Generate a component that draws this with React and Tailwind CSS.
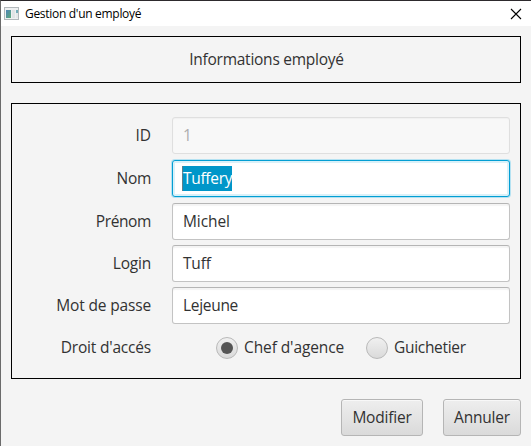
import React from "react";

const fields = [
  { label: "ID", value: "1", state: "disabled", row: "h-[37px] mb-[6px]", tl: "tracking-[-0.1px]", tv: "" },
  { label: "Nom", value: "Tuffery", state: "focused", row: "h-[37px] mb-[6px]", tl: "tracking-[-0.3px]", tv: "tracking-[-0.3px]" },
  { label: "Prénom", value: "Michel", state: "normal", row: "h-[37px] mb-[5px]", tl: "tracking-[-0.4px]", tv: "tracking-[-0.1px]" },
  { label: "Login", value: "Tuff", state: "normal", row: "h-[37px] mb-[5px]", tl: "tracking-[-0.2px]", tv: "tracking-[-0.2px]" },
  { label: "Mot de passe", value: "Lejeune", state: "normal", row: "h-[37px] mb-[5px]", tl: "tracking-[-0.15px]", tv: "tracking-[-0.3px]" },
];

const boxStyles = {
  disabled: "border border-[#dfdfdf] bg-[#f8f8f8] text-[#aeaeae] shadow-[inset_0_1px_1px_#f0f0f0]",
  focused: "border border-[#039ed3] bg-white text-white shadow-[0_0_0_1px_#b5e2f2,inset_0_0_0_2px_#d9f1f9]",
  normal: "border border-[#c3c3c3] border-t-[#b5b5b5] bg-white text-[#323232] shadow-[inset_0_2px_1px_#f4f4f4]",
};

function Field({ label, value, state, row, tl, tv }) {
  return (
    <div className={`flex items-center ${row}`}>
      <span className={`w-[139px] pb-px text-right ${tl}`}>{label}</span>
      <div className={`ml-[21px] flex h-[37px] w-[338px] items-center rounded-[3px] pl-[10px] ${boxStyles[state]}`}>
        {state === "focused" ? (
          <span className={`flex h-[25px] w-[50px] -ml-px items-center border-l border-[#5e7f8a] bg-[#0096c9] pb-px ${tv}`}>{value}</span>
        ) : (
          <span className={`pb-px ${tv}`}>{value}</span>
        )}
      </div>
    </div>
  );
}

function Radio({ label, checked, tracking }) {
  return (
    <div className="flex items-center">
      <span className="flex size-[22px] items-center justify-center rounded-full border border-[#b9b9b9] bg-linear-to-b from-[#f0f0f0] to-[#dadada]">
        {checked && <span className="size-[12px] rounded-full bg-[#555555]" />}
      </span>
      <span className={`ml-[6px] pb-px ${tracking}`}>{label}</span>
    </div>
  );
}

function Button({ children, width }) {
  return (
    <button
      className={`flex h-[37px] items-center justify-center rounded-[3px] border border-[#b5b5b5] bg-linear-to-b from-[#eeeeee] to-[#dadada] pb-px tracking-[-0.2px] shadow-[inset_0_1px_0_#f8f8f8] ${width}`}
    >
      {children}
    </button>
  );
}

export default function App() {
  return (
    <div className="flex h-[446px] w-[531px] flex-col overflow-hidden border-t border-l border-t-[#2d2a2d] border-l-[#6b6b6b] bg-[#f4f4f4] font-['Open_Sans',sans-serif] text-[15.5px] leading-[20px] whitespace-nowrap text-[#323232]">
      <header className="flex h-[25px] shrink-0 items-center bg-white pr-[9px] pl-[3px] text-black">
        <svg width="15" height="13" viewBox="0 0 15 13" shapeRendering="crispEdges">
          <defs>
            <linearGradient id="pane" x1="0" y1="0" x2="1" y2="1">
              <stop offset="0" stopColor="#4f86b8" />
              <stop offset="1" stopColor="#5eaa79" />
            </linearGradient>
          </defs>
          <rect x="0.5" y="0.5" width="14" height="12" fill="#eef0f1" stroke="#b2b8bb" />
          <rect x="2" y="3" width="5" height="8" fill="url(#pane)" />
          <rect x="8" y="3" width="3" height="8" fill="#e0e4e6" />
          <rect x="12" y="3" width="2" height="3" fill="#72acb9" />
          <rect x="12" y="6" width="2" height="5" fill="#e4e8e9" />
        </svg>
        <span className="ml-[6px] text-[12px] tracking-[-0.3px]">Gestion d'un employé</span>
        <svg className="ml-auto" width="12" height="12" viewBox="0 0 12 12" fill="none" stroke="#000" strokeWidth="1.1">
          <path d="M1 1 11 11M11 1 1 11" />
        </svg>
      </header>

      <main className="flex flex-col pt-[10px] pr-[10px] pl-[10px]">
        <section className="flex h-[47px] items-center justify-center border border-black pb-px pl-px tracking-[-0.25px]">
          Informations employé
        </section>

        <section className="mt-5 h-[276px] border border-black pt-[13px]">
          {fields.map((f) => (
            <Field key={f.label} {...f} />
          ))}
          <div className="flex h-[37px] items-center">
            <span className="w-[139px] pb-px text-right tracking-[-0.2px]">Droit d'accés</span>
            <div className="ml-[65px] flex">
              <div className="w-[150px]">
                <Radio label="Chef d'agence" checked tracking="tracking-[-0.1px]" />
              </div>
              <Radio label="Guichetier" tracking="tracking-[-0.3px]" />
            </div>
          </div>
        </section>

        <footer className="mt-5 flex justify-end gap-5">
          <Button width="w-[82px]">Modifier</Button>
          <Button width="w-[78px]">Annuler</Button>
        </footer>
      </main>
    </div>
  );
}
